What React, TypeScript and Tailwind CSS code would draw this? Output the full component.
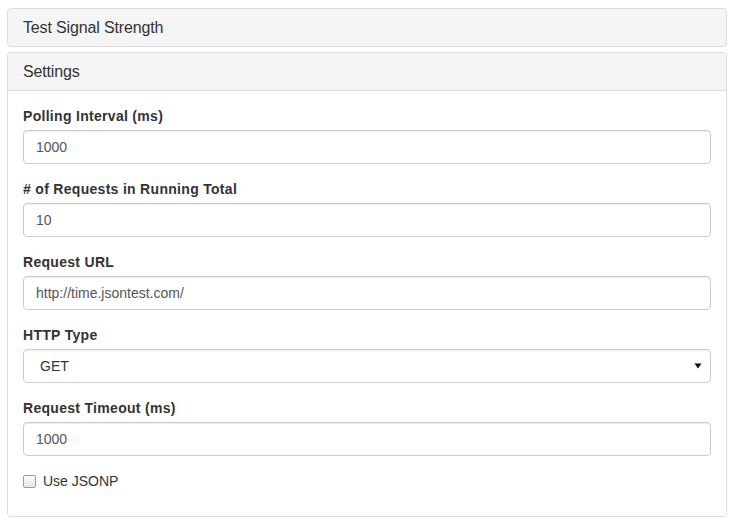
import React from 'react';

const fields = [
  { label: 'Polling Interval (ms)', value: '1000' },
  { label: '# of Requests in Running Total', value: '10' },
  { label: 'Request URL', value: 'http://time.jsontest.com/' },
];

const labelClass = 'block h-5 mb-[4px] text-[14px] leading-5 font-bold tracking-[0.3px] text-[#333]';

function Field({ label, value }: { label: string; value: string }) {
  return (
    <div className="mb-[15px]">
      <label className={labelClass}>{label}</label>
      <input
        readOnly
        value={value}
        className="block w-full h-[34px] px-3 border border-[#ccc] rounded-[4px] bg-white text-[14px] text-[#555] shadow-[inset_0_1px_1px_rgba(0,0,0,0.075)] outline-none"
      />
    </div>
  );
}

export default function App() {
  return (
    <div className="pt-2 pl-[7px] font-['Liberation_Sans',Arial,sans-serif] text-[#333]">
      <div className="w-[720px]">
        <div className="border border-[#ddd] rounded-[4px] bg-[#f5f5f5] h-[39px] px-[15px] flex items-center text-[16px] tracking-[-0.15px]">
          Test Signal Strength
        </div>

        <div className="mt-[5px] border border-[#ddd] rounded-[4px] bg-white overflow-hidden">
          <div className="h-[38px] bg-[#f5f5f5] border-b border-[#ddd] px-[15px] flex items-center text-[16px] tracking-[-0.15px]">
            Settings
          </div>
          <div className="p-[15px]">
            {fields.map((f) => (
              <Field key={f.label} label={f.label} value={f.value} />
            ))}

            <div className="mb-[15px]">
              <label className={labelClass}>HTTP Type</label>
              <div className="flex items-center justify-between w-full h-[34px] pl-[16px] pr-[8px] border border-[#ccc] rounded-[4px] bg-white text-[14px] text-[#333] shadow-[inset_0_1px_1px_rgba(0,0,0,0.075)]">
                <span>GET</span>
                <svg width="8" height="6" viewBox="0 0 8 6">
                  <path d="M0.5 0.5 L7.5 0.5 L4 5.5 Z" fill="#111" />
                </svg>
              </div>
            </div>

            <Field label="Request Timeout (ms)" value="1000" />

            <div className="h-5 mb-[10px] flex items-center text-[14px]">
              <span className="w-[13px] h-[13px] border border-[#999] rounded-[2px] bg-gradient-to-b from-[#fdfdfd] to-[#e6e6e6]" />
              <span className="ml-[7px] text-[#333]">Use JSONP</span>
            </div>
          </div>
        </div>
      </div>
    </div>
  );
}
